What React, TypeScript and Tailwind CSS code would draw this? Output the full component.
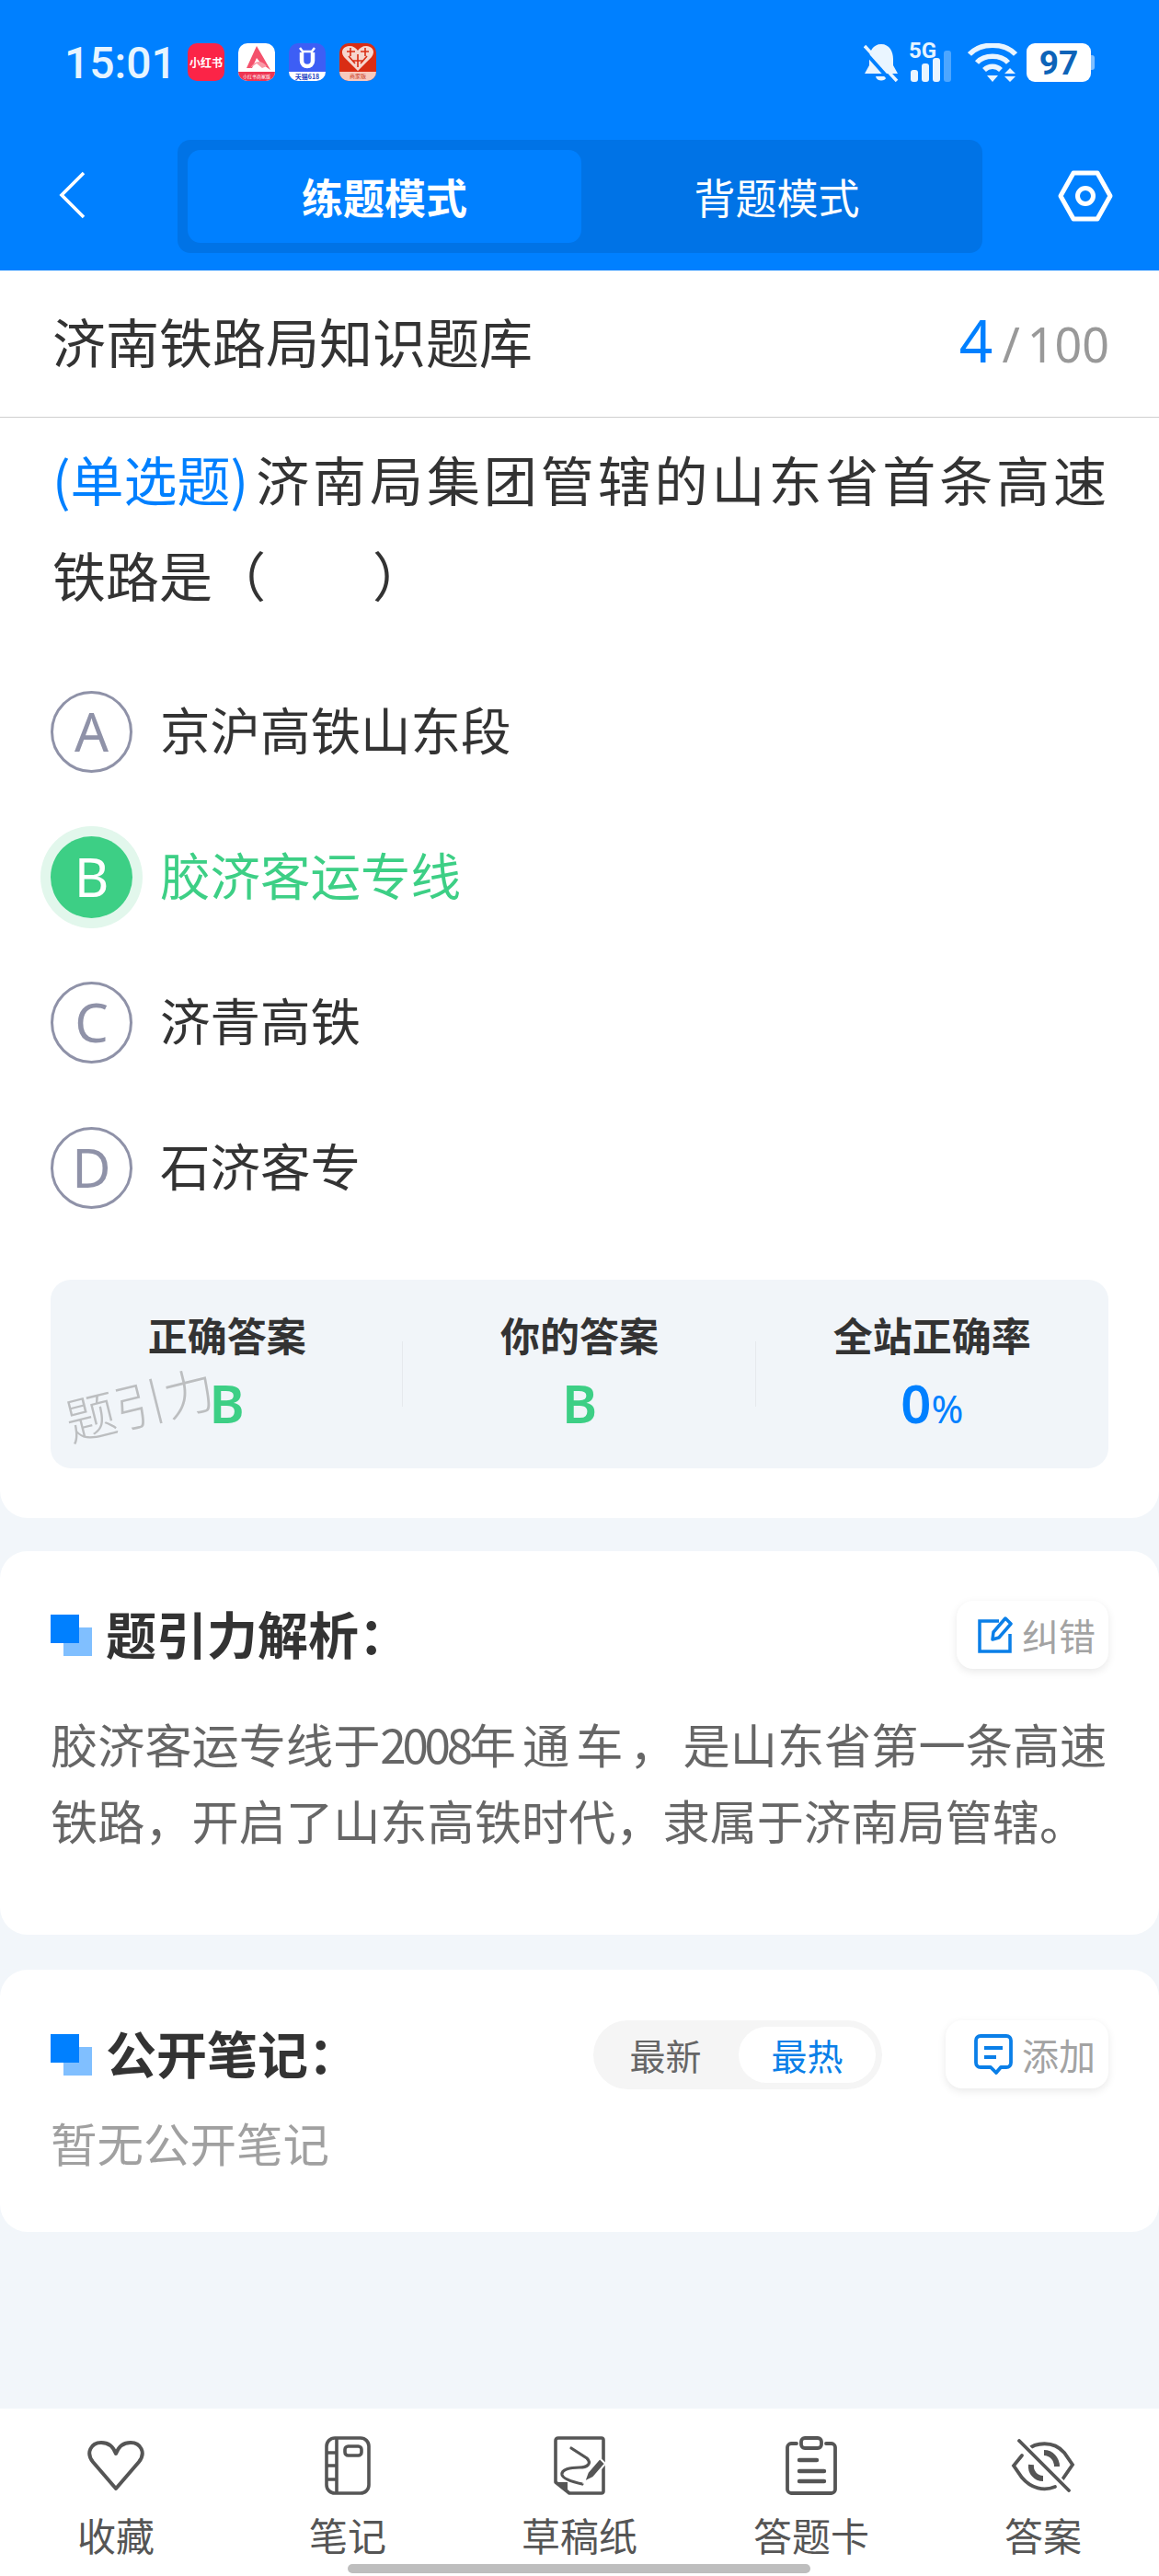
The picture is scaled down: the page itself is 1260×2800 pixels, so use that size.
import type { ReactNode } from 'react'

const options = [
  { key: 'A', text: '京沪高铁山东段' },
  { key: 'B', text: '胶济客运专线', picked: true },
  { key: 'C', text: '济青高铁' },
  { key: 'D', text: '石济客专' },
]

function SectionMark() {
  return (
    <div className="relative w-[45px] h-[45px] shrink-0">
      <div className="absolute right-0 bottom-0 w-[31px] h-[31px] bg-[#80bfff]" />
      <div className="absolute left-0 top-0 w-[31px] h-[31px] bg-[#0080ff]" />
    </div>
  )
}

function StatusBar() {
  return (
    <div className="h-[152px] pl-[70px] pr-[70px] pt-[47px] flex items-start text-[#e6f4ff]">
      <span className="w-[134px] mt-[1px] text-[48px] leading-[42px] font-medium font-['Roboto',sans-serif]">15:01</span>
      <div className="flex gap-[15px]">
        <div className="w-[40px] h-[41px] rounded-[10px] bg-[#fb2447] flex items-center justify-center text-white text-[12px] font-bold leading-none whitespace-nowrap">小红书</div>
        <div className="w-[40px] h-[41px] rounded-[10px] bg-white overflow-hidden flex flex-col">
          <svg viewBox="0 0 40 31" className="w-[40px] h-[31px]">
            <path d="M20 3 L9 27 H15 L20 16 L25 22 L35 29 L27 15 Z" fill="#f4516c" />
            <path d="M13 27 C18 18 25 18 31 25 L26 27 L20 22 Z" fill="#fa9aa8" />
          </svg>
          <div className="h-[10px] bg-[#ee3552] text-white text-[5px] leading-[10px] text-center whitespace-nowrap">小红书商家版</div>
        </div>
        <div className="w-[40px] h-[41px] rounded-[10px] bg-[#3d5ef5] overflow-hidden flex flex-col">
          <svg viewBox="0 0 40 31" className="w-[40px] h-[31px]">
            <path d="M12 5 L15 9 H25 L28 5" fill="none" stroke="white" strokeWidth="2.5" />
            <path d="M14 10 V19 C14 27 26 27 26 19 V10" fill="none" stroke="white" strokeWidth="4.5" />
          </svg>
          <div className="h-[10px] bg-white text-[#1d3fc4] text-[7px] leading-[10px] font-bold text-center whitespace-nowrap">天猫618</div>
        </div>
        <div className="w-[40px] h-[41px] rounded-[10px] bg-[#d92d14] overflow-hidden flex flex-col">
          <svg viewBox="0 0 40 31" className="w-[40px] h-[31px]">
            <path d="M20 30 L5 15 C0 8 5 3 11 3 C15 3 18 5 20 8 C22 5 25 3 29 3 C35 3 40 8 35 15 Z" fill="#f6d7cf" />
            <path d="M8 9 H17 M23 9 H32 M12 5 V14 M28 5 V14 M14 19 H26 M20 12 V26 M10 14 L17 22 M30 14 L23 22" stroke="#d92d14" strokeWidth="1.6" />
          </svg>
          <div className="h-[10px] bg-[#f8c9bd] text-[#c8371f] text-[6px] leading-[10px] text-center whitespace-nowrap">商家版</div>
        </div>
      </div>

      <div className="ml-auto flex items-start">
        <svg viewBox="0 0 38 42" className="w-[38px] h-[42px]">
          <path d="M19 1 C28 1 32 9 32 17 V24 L37 33 H1 L6 24 V17 C6 9 10 1 19 1 Z" fill="#eaf5ff" />
          <path d="M13 36 H25 C24 42 14 42 13 36 Z" fill="#eaf5ff" />
          <path d="M-1 7 L33 45" stroke="#0080ff" strokeWidth="4" />
          <path d="M1 3 L36 41" stroke="#eaf5ff" strokeWidth="3.5" />
        </svg>
        <div className="relative w-[52px] h-[42px] ml-[13px]">
          <span className="absolute left-[-2px] top-[-3px] text-[24px] leading-[22px] font-bold font-['Roboto',sans-serif]">5G</span>
          <div className="absolute left-0 bottom-0 flex items-end gap-[4px]">
            <div className="w-[8px] h-[13px] rounded-[3px] bg-[#eaf5ff]" />
            <div className="w-[8px] h-[20px] rounded-[3px] bg-[#eaf5ff]" />
            <div className="w-[8px] h-[26px] rounded-[3px] bg-[#eaf5ff]" />
            <div className="w-[8px] h-[34px] rounded-[3px] bg-[#4da6ff]" />
          </div>
        </div>
        <svg viewBox="0 0 54 42" className="w-[54px] h-[42px] ml-[10px]">
          <path d="M2 12 C14 -1 40 -1 52 12" fill="none" stroke="#eaf5ff" strokeWidth="5.5" />
          <path d="M10 21 C18 12 36 12 44 21" fill="none" stroke="#eaf5ff" strokeWidth="5.5" />
          <path d="M18 29 C23 24 31 24 36 29" fill="none" stroke="#eaf5ff" strokeWidth="5.5" />
          <path d="M21 35 H33 L27 42 Z" fill="#eaf5ff" />
          <path d="M46 27 L52 33 H40 Z M40 36 H52 L46 42 Z" fill="#eaf5ff" />
        </svg>
        <div className="w-[70px] h-[42px] ml-[10px] rounded-[9px] bg-white flex items-center justify-center text-[#0d63b8] text-[37px] leading-none font-bold font-['Roboto',sans-serif]">97</div>
        <div className="w-[4px] h-[16px] mt-[13px] rounded-r-[3px] bg-[#80bfff]" />
      </div>
    </div>
  )
}

function NavBar() {
  return (
    <div className="h-[142px] flex items-start">
      <div className="w-[193px] h-[123px] pl-[64px] pt-[34px]">
        <svg viewBox="0 0 28 52" className="w-[28px] h-[52px]">
          <path d="M27 2 L3 26 L27 50" fill="none" stroke="white" strokeWidth="3.6" />
        </svg>
      </div>
      <div className="w-[875px] h-[123px] p-[11px] rounded-[14px] bg-[#0073e6] flex text-white text-[45px]">
        <div className="w-[428px] rounded-[14px] bg-[#0080ff] flex items-center justify-center font-bold">练题模式</div>
        <div className="flex-1 flex items-center justify-center">背题模式</div>
      </div>
      <div className="pl-[82px] pt-[33px]">
        <svg viewBox="0 0 60 56" className="w-[60px] h-[56px]">
          <path d="M17 3 H43 L57 28 L43 53 H17 L3 28 Z" fill="none" stroke="white" strokeWidth="5" strokeLinejoin="round" />
          <circle cx="30" cy="28" r="8.5" fill="none" stroke="white" strokeWidth="5" />
        </svg>
      </div>
    </div>
  )
}

function Stat({ label, children, divider }: { label: string; children: ReactNode; divider?: boolean }) {
  return (
    <div className="relative flex-1 flex flex-col items-center pt-[36px]">
      <div className="text-[43px] leading-[46px] font-bold text-[#333]">{label}</div>
      <div className="mt-[27px] h-[50px] text-[58px] leading-[50px] font-semibold font-['Noto_Sans',sans-serif]">{children}</div>
      {divider && <div className="absolute right-0 top-[67px] w-px h-[71px] bg-[#e6e9ed]" />}
    </div>
  )
}

function ToolButton({ icon, label, width }: { icon: ReactNode; label: string; width: string }) {
  return (
    <div className={`${width} h-[74px] rounded-[18px] bg-white shadow-[0_3px_10px_rgba(0,0,0,0.09)] flex items-center justify-end pr-[14px] gap-[9px] text-[40px] text-[#a3a3a3]`}>
      {icon}
      <span className="leading-none">{label}</span>
    </div>
  )
}

function BottomItem({ icon, label }: { icon: ReactNode; label: string }) {
  return (
    <div className="w-[252px] flex flex-col items-center">
      <div className="h-[66px] flex items-center justify-center">{icon}</div>
      <div className="mt-[17px] text-[42px] leading-[50px] text-[#555]">{label}</div>
    </div>
  )
}

export default function App() {
  return (
    <div className="relative w-[1260px] h-[2800px] overflow-hidden flex flex-col bg-[#f2f6fa] font-['Noto_Sans_CJK_SC',sans-serif]">
      <div className="h-[294px] bg-[#0080ff]">
        <StatusBar />
        <NavBar />
      </div>

      <div className="h-[1356px] bg-white rounded-b-[30px]">
        <div className="h-[160px] px-[57px] pb-[8px] flex items-center justify-between border-b-[1.5px] border-[#cfcfcf]">
          <span className="text-[58px] leading-none text-[#333]">济南铁路局知识题库</span>
          <span className="flex items-baseline -mr-[3px] text-[52px] leading-none text-[#999] font-['Noto_Sans',sans-serif]">
            <span className="text-[64px] text-[#0080ff] mr-[10px]">4</span>
            <span className="mr-[8px]">/</span>100
          </span>
        </div>

        <div className="px-[57px] pt-[14px] text-[58px] leading-[104px] text-[#333]">
          <div className="text-justify [text-align-last:justify]">
            <span className="inline-block mr-[4px] text-[#0080ff] [text-align-last:left]">(单选题)</span>济南局集团管辖的山东省首条高速
          </div>
          <div>铁路是（　　）</div>
        </div>

        <div className="mt-[40px]">
          {options.map(opt => (
            <div key={opt.key} className={`h-[158px] pl-[55px] flex items-center text-[54.5px] ${opt.picked ? 'text-[#3dcf85]' : 'text-[#333]'}`}>
              <div
                className={`w-[89px] h-[89px] rounded-full flex items-center justify-center text-[58px] leading-none font-['Noto_Sans',sans-serif] ${
                  opt.picked
                    ? 'bg-[#3dcf85] text-white shadow-[0_0_0_11px_#e2f7ec]'
                    : 'border-[3px] border-[#8f92a8] text-[#8f92a8]'
                }`}
              >
                {opt.key}
              </div>
              <span className="ml-[30px] pb-[6px] leading-none">{opt.text}</span>
            </div>
          ))}
        </div>

        <div className="relative mx-[55px] mt-[43px] h-[205px] rounded-[22px] bg-[#f1f5f9] flex">
          <Stat label="正确答案" divider>
            <span className="text-[#3dcf85]">B</span>
          </Stat>
          <Stat label="你的答案" divider>
            <span className="text-[#3dcf85]">B</span>
          </Stat>
          <Stat label="全站正确率">
            <span className="text-[#0080ff]">0<span className="text-[42px] font-normal">%</span></span>
          </Stat>
          <div className="absolute left-[14px] top-[106px] text-[55px] leading-none text-[#bcbec0] font-light rotate-[-14deg] whitespace-nowrap">题引力</div>
        </div>
      </div>

      <div className="mt-[36px] h-[417px] bg-white rounded-[30px] px-[55px]">
        <div className="pt-[54px] flex items-start">
          <div className="mt-[15px]"><SectionMark /></div>
          <div className="ml-[15px] text-[55px] leading-[68px] font-bold text-[#333]">题引力解析：</div>
          <div className="ml-auto">
            <ToolButton
              width="w-[165px]"
              label="纠错"
              icon={
                <svg viewBox="0 0 40 42" className="w-[40px] h-[42px]">
                  <path d="M24 6 H3 V39 H36 V20" fill="none" stroke="#0a7fe8" strokeWidth="3.5" />
                  <path d="M17 26 L18 18 L31 3 L37 9 L24 24 Z" fill="none" stroke="#0a7fe8" strokeWidth="3.5" strokeLinejoin="round" />
                </svg>
              }
            />
          </div>
        </div>
        <div className="mt-[40px] text-[51.2px] leading-[83px] text-[#666] whitespace-nowrap">
          <div>
            胶济客运专线于<span className="inline-block tracking-[-4.3px]">2008</span><span className="inline-block tracking-[7px]">年通车，</span>是山东省第一条高速
          </div>
          <div>铁路，开启了山东高铁时代，隶属于济南局管辖。</div>
        </div>
      </div>

      <div className="mt-[38px] h-[285px] bg-white rounded-[30px] px-[55px]">
        <div className="pt-[55px] flex items-start">
          <div className="mt-[15px]"><SectionMark /></div>
          <div className="ml-[15px] text-[55px] leading-[68px] font-bold text-[#333]">公开笔记：</div>
          <div className="ml-auto w-[314px] h-[75px] p-[7px] rounded-full bg-[#f5f5f5] flex text-[39px] leading-none">
            <div className="flex-1 flex items-center justify-center pr-[8px] text-[#666]">最新</div>
            <div className="w-[149px] rounded-full bg-white flex items-center justify-center text-[#0a7fe8]">最热</div>
          </div>
          <div className="ml-[69px]">
            <ToolButton
              width="w-[177px]"
              label="添加"
              icon={
                <svg viewBox="0 0 44 46" className="w-[44px] h-[46px]">
                  <path d="M8 3 H36 C39 3 41 5 41 8 V32 C41 35 39 37 36 37 H30 L25 43 L19 37 H8 C5 37 3 35 3 32 V8 C3 5 5 3 8 3 Z" fill="none" stroke="#0a7fe8" strokeWidth="3.8" strokeLinejoin="round" />
                  <path d="M12 16 H32 M12 26 H25" stroke="#0a7fe8" strokeWidth="3.8" />
                </svg>
              }
            />
          </div>
        </div>
        <div className="mt-[15px] text-[50.5px] leading-[84px] text-[#a0a0a0]">暂无公开笔记</div>
      </div>

      <div className="mt-auto h-[182px] bg-white pt-[29px] flex">
        <BottomItem
          label="收藏"
          icon={
            <svg viewBox="0 0 64 56" className="w-[64px] h-[56px]">
              <path d="M32 53 L7 24 C-1 14 5 3 16 3 C23 3 29 7 32 15 C35 7 41 3 48 3 C59 3 65 14 57 24 Z" fill="none" stroke="#555" strokeWidth="4" strokeLinejoin="round" />
            </svg>
          }
        />
        <BottomItem
          label="笔记"
          icon={
            <svg viewBox="0 0 50 64" className="w-[50px] h-[64px]">
              <rect x="2" y="2" width="46" height="60" rx="9" fill="none" stroke="#555" strokeWidth="3.6" />
              <path d="M13 2 V62 M2 18 H13 M2 32 H13 M2 47 H13" stroke="#555" strokeWidth="3.6" />
              <rect x="22" y="11" width="18" height="10" rx="3.5" fill="none" stroke="#555" strokeWidth="3.6" />
            </svg>
          }
        />
        <BottomItem
          label="草稿纸"
          icon={
            <svg viewBox="0 0 56 64" className="w-[56px] h-[64px]">
              <path d="M5 2 H52 C53 2 54 3 54 4 V60 C54 61 53 62 52 62 H17 L2 50 V5 C2 3 3 2 5 2 Z" fill="none" stroke="#555" strokeWidth="3.6" strokeLinejoin="round" />
              <path d="M2 50 H15 V62 Z" fill="#555" />
              <path d="M19 13 L36 24 C42 30 36 34 28 34 C18 34 8 36 9 42 C10 47 22 50 31 52" fill="none" stroke="#555" strokeWidth="3.2" strokeLinecap="round" />
              <path d="M33 50 L37 39 L50 24 L56 30 L43 45 Z" fill="#555" stroke="white" strokeWidth="2" />
            </svg>
          }
        />
        <BottomItem
          label="答题卡"
          icon={
            <svg viewBox="0 0 56 64" className="w-[56px] h-[64px]">
              <path d="M12 8 H6 C4 8 2 10 2 12 V58 C2 60 4 62 6 62 H50 C52 62 54 60 54 58 V12 C54 10 52 8 50 8 H44" fill="none" stroke="#555" strokeWidth="3.8" strokeLinecap="round" />
              <rect x="17" y="2" width="22" height="11" rx="4" fill="none" stroke="#555" strokeWidth="3.8" />
              <path d="M15 26 H34 M15 38 H42 M15 49 H42" stroke="#555" strokeWidth="4.4" strokeLinecap="round" />
            </svg>
          }
        />
        <BottomItem
          label="答案"
          icon={
            <svg viewBox="0 0 70 58" className="w-[70px] h-[58px]">
              <path d="M18 12 C26 4 46 1 58 15 L67 28 L56 44 M48 52 C36 57 22 54 12 42 L3 29 L12 18" fill="none" stroke="#555" strokeWidth="3.8" strokeLinecap="round" />
              <path d="M36 15 C44 15 50 22 50 30 M35 43 C27 43 21 36 22 28" fill="none" stroke="#555" strokeWidth="6" />
              <path d="M9 2 L63 56" stroke="white" strokeWidth="8" />
              <path d="M9 2 L63 56" stroke="#555" strokeWidth="3.8" strokeLinecap="round" />
            </svg>
          }
        />
      </div>

      <div className="absolute left-[378px] top-[2787px] w-[503px] h-[10px] rounded-full bg-[#bebebe]" />
    </div>
  )
}
